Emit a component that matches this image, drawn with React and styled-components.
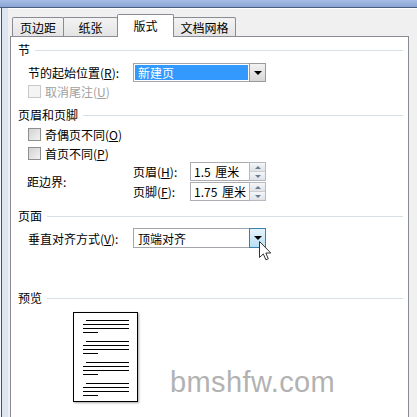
import React from "react";
import styled, { createGlobalStyle } from "styled-components";

const GlobalStyle = createGlobalStyle`
  html, body {
    margin: 0;
    padding: 0;
    background: #f0f0f0;
  }
  body {
    font-family: "Noto Sans CJK SC", "Liberation Sans", sans-serif;
    font-size: 12px;
    color: #000;
  }
  * { box-sizing: border-box; }
`;

const Window = styled.div`
  position: relative;
  width: 417px;
  height: 417px;
  overflow: hidden;
  background: #f0f0f0;
  display: flex;
  flex-direction: column;
`;

const TitleStrip = styled.div`
  flex: none;
  height: 8px;
  background: linear-gradient(#a6bde4, #8aa6d8);
  border-bottom: 1px solid #4b5d7c;
  box-shadow: 0 1px 0 #fff;
`;

const Frame = styled.div`
  flex: 1;
  min-height: 0;
  display: flex;
  flex-direction: column;
  padding: 6px 8px 0 10px;
  box-shadow: inset 1px 0 #f4f7fb, inset 2px 0 #3f5472, inset 8px 0 #dce5f0;
`;

const TabRow = styled.div`
  display: flex;
  align-items: flex-end;
  height: 22px;
  padding-left: 3px;
  position: relative;
  z-index: 1;
`;

const Tab = styled.div`
  width: ${(p) => p.$w}px;
  height: ${(p) => (p.$active ? 23 : 19)}px;
  margin-left: -1px;
  margin-bottom: ${(p) => (p.$active ? -1 : 0)}px;
  border: 1px solid #898c95;
  border-bottom: none;
  border-radius: 2px 2px 0 0;
  background: ${(p) => (p.$active ? "#fff" : "linear-gradient(#f3f3f3, #e4e4e4)")};
  display: flex;
  align-items: center;
  justify-content: center;
  padding-bottom: ${(p) => (p.$active ? 1 : 0)}px;
  font-size: 12px;
  white-space: nowrap;
`;

const Panel = styled.div`
  flex: 1;
  background: #fff;
  border: 1px solid #898c95;
  border-bottom: none;
  padding: 6px 5px 0 7px;
  display: flex;
  flex-direction: column;
`;

const Heading = styled.div`
  display: flex;
  align-items: center;
  gap: 5px;
  height: 14px;
  line-height: 14px;
  margin-top: ${(p) => p.$mt || 0}px;
  white-space: nowrap;

  &::after {
    content: "";
    flex: 1;
    border-top: 1px solid #d5dfe5;
  }
`;

const FieldRow = styled.div`
  display: flex;
  align-items: center;
  height: ${(p) => p.$h || 19}px;
  padding-left: 10px;
  margin-top: ${(p) => p.$mt || 0}px;
`;

const Label = styled.span`
  flex: none;
  width: ${(p) => p.$w}px;
  white-space: nowrap;
  color: ${(p) => (p.$disabled ? "#a0a0a0" : "#000")};
`;

const Combo = styled.div`
  width: ${(p) => p.$w}px;
  height: 100%;
  border: 1px solid #a3a6ab;
  background: #fff;
  display: flex;
  align-items: stretch;
`;

const ComboText = styled.div`
  flex: 1;
  margin: 1px;
  padding-left: 3px;
  display: flex;
  align-items: center;
  background: ${(p) => (p.$selected ? "#3399ff" : "transparent")};
  color: ${(p) => (p.$selected ? "#fff" : "#000")};
  white-space: nowrap;
`;

const DropButton = styled.div`
  flex: none;
  width: 17px;
  margin: -1px -1px -1px 0;
  border: 1px solid ${(p) => (p.$hover ? "#3c7fb1" : "#9a9a9a")};
  background: ${(p) =>
    p.$hover ? "linear-gradient(#e5f4fc, #b9dff4)" : "linear-gradient(#f2f2f2, #d6d6d6)"};
  display: flex;
  align-items: center;
  justify-content: center;

  &::after {
    content: "";
    border-left: 4px solid transparent;
    border-right: 4px solid transparent;
    border-top: 4px solid #000;
  }
`;

const CheckRow = styled.div`
  display: flex;
  align-items: center;
  gap: 4px;
  height: 14px;
  padding-left: 10px;
  margin-top: ${(p) => p.$mt || 0}px;
  color: ${(p) => (p.$disabled ? "#a0a0a0" : "#000")};
  white-space: nowrap;
`;

const CheckBox = styled.span`
  flex: none;
  width: 13px;
  height: 13px;
  border: 1px solid ${(p) => (p.$disabled ? "#c8c8c8" : "#8e8f8f")};
  background: ${(p) =>
    p.$disabled ? "#f4f4f4" : "linear-gradient(135deg, #d2d2d2, #f2f2f2)"};
`;

const MarginBlock = styled.div`
  display: flex;
  align-items: center;
  padding-left: 9px;
  margin-top: 2px;
`;

const SpinStack = styled.div`
  display: flex;
  flex-direction: column;
  gap: 1px;
`;

const SpinRow = styled.div`
  display: flex;
  align-items: center;
  height: 19px;
`;

const SpinBox = styled.div`
  width: 76px;
  height: 100%;
  border: 1px solid #abadb3;
  display: flex;
  align-items: stretch;
`;

const SpinValue = styled.div`
  flex: 1;
  padding-left: 3px;
  display: flex;
  align-items: center;
  white-space: nowrap;
  word-spacing: 2px;
`;

const SpinButtons = styled.div`
  flex: none;
  width: 17px;
  margin: -1px -1px -1px 0;
  border: 1px solid #b6b9bf;
  display: flex;
  flex-direction: column;
`;

const SpinHalf = styled.div`
  flex: 1;
  background: linear-gradient(#f4f6f8, #dfe3e8);
  display: flex;
  align-items: center;
  justify-content: center;
  border-top: ${(p) => (p.$down ? "1px solid #c9ccd1" : "none")};

  &::after {
    content: "";
    border-left: 3px solid transparent;
    border-right: 3px solid transparent;
    ${(p) => (p.$down ? "border-top: 3px solid #6e7b8c;" : "border-bottom: 3px solid #6e7b8c;")}
  }
`;

const PreviewPage = styled.div`
  width: 65px;
  height: 90px;
  margin: 7px 0 0 55px;
  border: 1px solid #000;
  background: #fff;
  box-shadow: 1px 1px 2px rgba(0, 0, 0, 0.35);
  padding: 7px 8px 0 9px;
  display: flex;
  flex-direction: column;
  gap: 8px;
`;

const TextGroup = styled.div`
  display: flex;
  flex-direction: column;
  gap: 3px;
`;

const TextLine = styled.div`
  height: 1px;
  background: #000;
  margin-left: ${(p) => p.$indent || 0}px;
  width: ${(p) => (p.$short ? "15px" : "auto")};
`;

const Watermark = styled.div`
  position: absolute;
  left: 170px;
  top: 368px;
  font-family: "Liberation Sans", Arial, sans-serif;
  font-size: 29px;
  line-height: 29px;
  color: #b2b2b2;
  letter-spacing: 0.4px;
`;

const Pointer = styled.svg`
  position: absolute;
  left: 259px;
  top: 241px;
`;

const Key = ({ k }) => (
  <>
    (<u>{k}</u>)
  </>
);

const previewGroups = [0, 1, 2, 3];

export default function App() {
  return (
    <Window>
      <GlobalStyle />
      <TitleStrip />
      <Frame>
        <TabRow>
          <Tab $w={52}>页边距</Tab>
          <Tab $w={55}>纸张</Tab>
          <Tab $w={57} $active>版式</Tab>
          <Tab $w={63}>文档网格</Tab>
        </TabRow>
        <Panel>
          <Heading>节</Heading>
          <FieldRow $mt={6}>
            <Label $w={105}>节的起始位置<Key k="R" />:</Label>
            <Combo $w={133}>
              <ComboText $selected>新建页</ComboText>
              <DropButton />
            </Combo>
          </FieldRow>
          <CheckRow $mt={2} $disabled>
            <CheckBox $disabled />
            <span>取消尾注<Key k="U" /></span>
          </CheckRow>

          <Heading $mt={10}>页眉和页脚</Heading>
          <CheckRow $mt={5}>
            <CheckBox />
            <span>奇偶页不同<Key k="O" /></span>
          </CheckRow>
          <CheckRow $mt={5}>
            <CheckBox />
            <span>首页不同<Key k="P" /></span>
          </CheckRow>
          <MarginBlock>
            <Label $w={106}>距边界:</Label>
            <SpinStack>
              <SpinRow>
                <Label $w={57}>页眉<Key k="H" />:</Label>
                <SpinBox>
                  <SpinValue>1.5 厘米</SpinValue>
                  <SpinButtons>
                    <SpinHalf />
                    <SpinHalf $down />
                  </SpinButtons>
                </SpinBox>
              </SpinRow>
              <SpinRow>
                <Label $w={57}>页脚<Key k="F" />:</Label>
                <SpinBox>
                  <SpinValue>1.75 厘米</SpinValue>
                  <SpinButtons>
                    <SpinHalf />
                    <SpinHalf $down />
                  </SpinButtons>
                </SpinBox>
              </SpinRow>
            </SpinStack>
          </MarginBlock>

          <Heading $mt={8}>页面</Heading>
          <FieldRow $mt={5} $h={20}>
            <Label $w={105}>垂直对齐方式<Key k="V" />:</Label>
            <Combo $w={133}>
              <ComboText>顶端对齐</ComboText>
              <DropButton $hover />
            </Combo>
          </FieldRow>

          <Heading $mt={43}>预览</Heading>
          <PreviewPage>
            {previewGroups.map((g) => (
              <TextGroup key={g}>
                <TextLine $indent={3} />
                <TextLine />
                <TextLine />
                <TextLine $short />
              </TextGroup>
            ))}
          </PreviewPage>
        </Panel>
      </Frame>

      <Watermark>bmshfw.com</Watermark>

      <Pointer width="13" height="20" viewBox="0 0 13 20">
        <path
          d="M0.5 0.5 L0.5 16.5 L4.3 12.9 L6.9 18.8 L9.3 17.8 L6.8 12 L11.8 12 Z"
          fill="#fff"
          stroke="#333"
          strokeWidth="1"
          strokeLinejoin="round"
        />
      </Pointer>
    </Window>
  );
}
